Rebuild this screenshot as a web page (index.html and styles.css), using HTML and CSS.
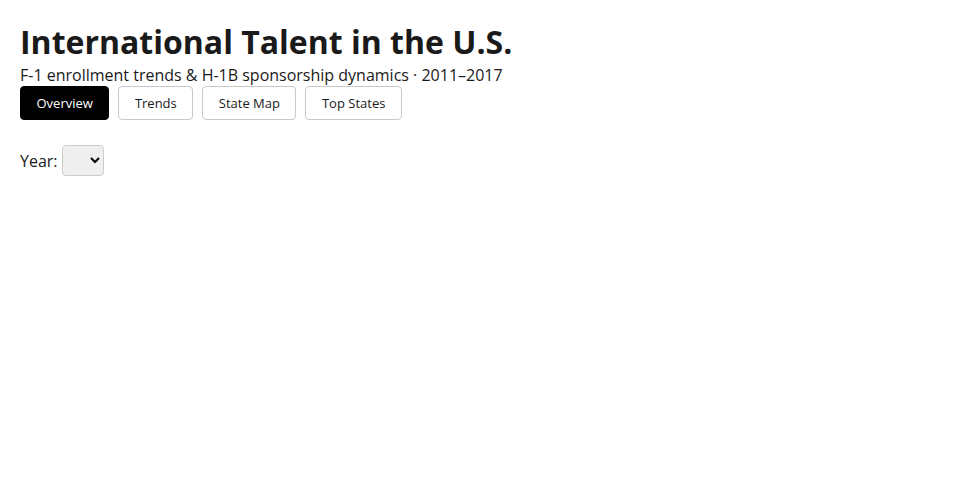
FILE: index.html
```html
<!DOCTYPE html>
<html lang="en">
<head>
<meta charset="utf-8">
<title>International Talent in the U.S.</title>
<link rel="stylesheet" href="styles.css">
</head>
<body>
<header class="header">
  <h1 class="title">International Talent in the U.S.</h1>
  <p class="subtitle">F-1 enrollment trends &amp; H-1B sponsorship dynamics · 2011–2017</p>
</header>
<nav class="tabs">
  <button class="tab active">Overview</button>
  <button class="tab">Trends</button>
  <button class="tab">State Map</button>
  <button class="tab">Top States</button>
</nav>
<div class="controls">
  <label class="year-label" for="year">Year:</label>
  <select id="year" class="year-select"></select>
</div>
</body>
</html>
```
FILE: styles.css
```css
body {
  margin: 20px;
  font-family: "Open Sans", "Liberation Sans", sans-serif;
  color: #1a1a1a;
  background: #fff;
}
.title {
  margin: 0;
  font-size: 32px;
  font-weight: 700;
  line-height: 44px;
}
.subtitle {
  margin: 0;
  font-size: 16px;
  line-height: 22px;
}
.tabs {
  display: flex;
  gap: 9px;
}
.tab {
  font-family: "Open Sans", "Liberation Sans", sans-serif;
  font-size: 13px;
  height: 34px;
  padding: 0 15.5px;
  background: #fff;
  color: #1a1a1a;
  border: 1px solid #c8c8c8;
  border-radius: 4px;
}
.tab.active {
  background: #000;
  color: #fff;
  border-color: #000;
}
.controls {
  display: flex;
  align-items: center;
  gap: 4px;
  margin-top: 25px;
}
.year-label {
  font-size: 16px;
}
.year-select {
  width: 42px;
  height: 31px;
  border: 1px solid #ccc;
  border-radius: 4px;
  background: #efefef;
}
```
